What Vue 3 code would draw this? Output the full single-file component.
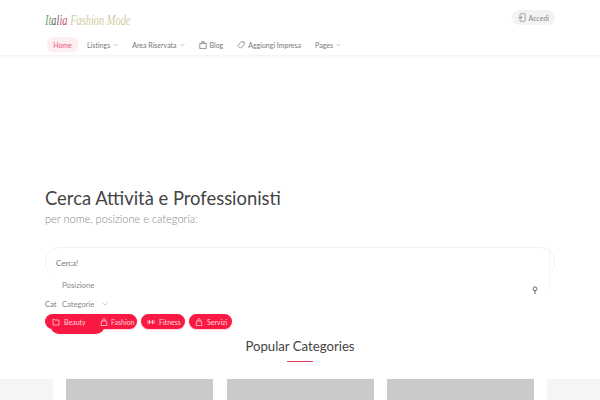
<template>
  <div class="page">
    <header class="site-header">
      <div class="top-row">
        <a class="logo"><span class="it-g">It</span><span class="it-k">al</span><span class="it-r">ia</span> <span class="logo-rest">Fashion Mode</span></a>
        <button class="login-btn">
          <svg width="8" height="9" viewBox="0 0 10 11" fill="none" stroke="currentColor" stroke-width="0.9">
            <rect x="2.5" y="0.8" width="6.5" height="9.4" rx="1"></rect>
            <path d="M0.5 5.5h4.5M3.6 4l1.6 1.5-1.6 1.5"></path>
          </svg>
          <span>Accedi</span>
        </button>
      </div>
      <nav class="nav-row">
        <a v-for="item in navItems" :key="item.label" class="nav-item" :class="{ active: item.active }">
          <svg v-if="item.icon === 'blog'" width="8" height="8" viewBox="0 0 10 10" fill="none" stroke="currentColor" stroke-width="1">
            <path d="M1 3h8v6.5H1zM3.5 3V0.8h3V3"></path>
          </svg>
          <svg v-if="item.icon === 'tag'" width="8" height="8" viewBox="0 0 10 10" fill="none" stroke="currentColor" stroke-width="1">
            <path d="M5.5 1H9v3.5L4.5 9 1 5.5z"></path>
          </svg>
          <span>{{ item.label }}</span>
          <svg v-if="item.caret" class="caret" width="5" height="4" viewBox="0 0 5 4" fill="none" stroke="currentColor" stroke-width="0.7">
            <path d="M0.5 1l2 2 2-2"></path>
          </svg>
        </a>
      </nav>
    </header>

    <main class="hero">
      <h1>Cerca Attività e Professionisti</h1>
      <p class="subtitle">per nome, posizione e categoria:</p>

      <form class="search-form" @submit.prevent>
        <div class="search-box"><span>Cerca!</span></div>
        <div class="location-row">
          <span>Posizione</span>
          <svg class="pin" width="6" height="8" viewBox="0 0 6 8" fill="none" stroke="#666" stroke-width="1">
            <circle cx="3" cy="2.8" r="1.9"></circle>
            <path d="M3 4.8V8"></path>
          </svg>
        </div>
        <div class="category-row">
          <span class="cat-cut">Cat</span>
          <span>Categorie</span>
          <svg width="6" height="4" viewBox="0 0 6 4" fill="none" stroke="#bbb" stroke-width="0.8">
            <path d="M0.5 0.8l2.5 2.3 2.5-2.3"></path>
          </svg>
        </div>
      </form>

      <div class="tags">
        <div class="submit-blob"></div>
        <a v-for="tag in tags" :key="tag.label" class="tag" :class="tag.cls">
          <svg v-if="tag.icon === 'beauty'" width="8" height="8" viewBox="0 0 8 8" fill="none" stroke="currentColor" stroke-width="0.8">
            <path d="M1 1l2 1h4v5H1z"></path>
          </svg>
          <svg v-if="tag.icon === 'bag'" width="8" height="8" viewBox="0 0 8 8" fill="none" stroke="currentColor" stroke-width="0.8">
            <path d="M1 7.5l0.6-4.5h4.8L7 7.5zM2.8 3V1.8a1.2 1.2 0 0 1 2.4 0V3"></path>
          </svg>
          <svg v-if="tag.icon === 'fit'" width="8" height="8" viewBox="0 0 8 8" fill="none" stroke="currentColor" stroke-width="1">
            <path d="M1 2.5v3M2.5 2v4M5.5 2v4M7 2.5v3M2.5 4h3"></path>
          </svg>
          <span>{{ tag.label }}</span>
        </a>
      </div>

      <h2>Popular Categories</h2>
      <div class="title-rule"></div>
    </main>

    <section class="cards">
      <div class="card side"></div>
      <div class="card"></div>
      <div class="card"></div>
      <div class="card"></div>
      <div class="card side"></div>
    </section>
  </div>
</template>

<script setup>
const navItems = [
  { label: 'Home', active: true },
  { label: 'Listings', caret: true },
  { label: 'Area Riservata', caret: true },
  { label: 'Blog', icon: 'blog' },
  { label: 'Aggiungi Impresa', icon: 'tag' },
  { label: 'Pages', caret: true }
]

const tags = [
  { label: 'Beauty', icon: 'beauty', cls: 'tag-beauty' },
  { label: 'Fashion', icon: 'bag', cls: 'tag-fashion' },
  { label: 'Fitness', icon: 'fit', cls: 'tag-fitness' },
  { label: 'Servizi', icon: 'bag', cls: 'tag-servizi' }
]
</script>

<style scoped>
.page {
  width: 600px;
  height: 400px;
  overflow: hidden;
  background: #fff;
  font-family: Lato, "Open Sans", "Liberation Sans", sans-serif;
  color: #555;
}

.site-header {
  height: 55px;
  box-sizing: border-box;
  padding: 0 45px;
  background: #fff;
  box-shadow: 0 1px 4px rgba(0, 0, 0, 0.07);
}

.top-row {
  height: 35px;
  display: flex;
  align-items: center;
  justify-content: space-between;
}

.logo {
  font-family: "Liberation Serif", serif;
  font-style: italic;
  font-size: 10.4px;
  color: #c9c6a0;
  white-space: nowrap;
  margin-top: 6px;
  transform: scaleY(1.4);
}

.it-g { color: #6aa574; }
.it-k { color: #666; }
.it-r { color: #c8506a; }
.logo-rest { color: #cfcba2; }

.login-btn {
  display: flex;
  align-items: center;
  gap: 3px;
  height: 15px;
  padding: 0 6px;
  border: none;
  border-radius: 8px;
  background: #f3f3f3;
  color: #888;
  font: inherit;
  font-size: 7px;
}

.nav-row {
  display: flex;
  align-items: center;
  gap: 4px;
  margin-top: 2px;
  margin-left: 2px;
}

.nav-item {
  display: flex;
  align-items: center;
  gap: 3px;
  height: 15px;
  padding: 0 5px;
  border-radius: 6px;
  font-size: 7px;
  color: #777;
  white-space: nowrap;
}

.nav-item.active {
  background: #fdeef1;
  color: #e8557a;
  padding: 0 6px;
  width: 31px;
  box-sizing: border-box;
  justify-content: center;
}

.caret {
  color: #aaa;
}

.hero {
  padding: 0 45px;
}

h1 {
  margin: 132px 0 0;
  height: 22px;
  font-size: 18.4px;
  line-height: 22px;
  font-weight: 400;
  color: #444;
}

.subtitle {
  margin: 3px 0 0;
  font-size: 11px;
  line-height: 14px;
  font-weight: 300;
  color: #888;
}

.search-form {
  margin-top: 21px;
  position: relative;
}

.search-form::after {
  content: "";
  position: absolute;
  right: 5px;
  top: 0;
  width: 1px;
  height: 44px;
  background: #f6f6f6;
}

.search-box {
  height: 31px;
  box-sizing: border-box;
  padding: 0 10px;
  display: flex;
  align-items: center;
  border: 1px solid #f2f2f2;
  border-bottom-color: transparent;
  border-radius: 15px;
  font-size: 8px;
  color: #777;
}

.location-row {
  position: relative;
  height: 19px;
  margin-top: -3px;
  padding-left: 17px;
  display: flex;
  align-items: center;
  font-size: 7.8px;
  color: #888;
}

.pin {
  position: absolute;
  right: 17px;
  top: 11px;
}

.category-row {
  height: 20px;
  display: flex;
  align-items: center;
  gap: 8px;
  font-size: 7.6px;
  color: #888;
}

.cat-cut {
  width: 9px;
  color: #777;
}

.tags {
  position: relative;
  display: flex;
  gap: 4px;
  height: 15px;
}

.submit-blob {
  position: absolute;
  left: 5px;
  top: 0;
  width: 55px;
  height: 20px;
  border-radius: 9px;
  background: #f91942;
}

.tag {
  position: relative;
  display: flex;
  align-items: center;
  gap: 4px;
  height: 15px;
  padding: 0 6px;
  border-radius: 8px;
  background: #f91942;
  color: #ffc9d3;
  font-size: 7px;
  box-shadow: 0 1px 2px rgba(249, 25, 66, 0.25);
  box-sizing: border-box;
}

.tag svg {
  flex-shrink: 0;
}

.tag span {
  color: #ffd5dd;
}

.tag-beauty {
  width: 52px;
  padding-left: 7px;
  border-radius: 8px 0 0 8px;
  box-shadow: none;
}

.tag-fashion {
  width: 40px;
  margin-left: -4px;
  padding: 0 0 0 3px;
  gap: 3px;
  border-radius: 0 8px 8px 0;
}

.tag-fitness {
  width: 44px;
}

.tag-servizi {
  width: 43px;
}

h2 {
  margin: 9px 0 0;
  height: 17px;
  text-align: center;
  font-size: 13.2px;
  line-height: 17px;
  font-weight: 400;
  color: #444;
}

.title-rule {
  width: 26px;
  height: 1px;
  margin: 6px auto 0;
  background: #e0405e;
}

.cards {
  display: grid;
  grid-template-columns: 53px 147px 147px 147px 53px;
  column-gap: 13.25px;
  margin-top: 17px;
}

.card {
  height: 60px;
  background: #cacaca;
}

.card.side {
  background: #f5f5f5;
}
</style>

<style>
html, body {
  margin: 0;
  background: #fff;
}
</style>
